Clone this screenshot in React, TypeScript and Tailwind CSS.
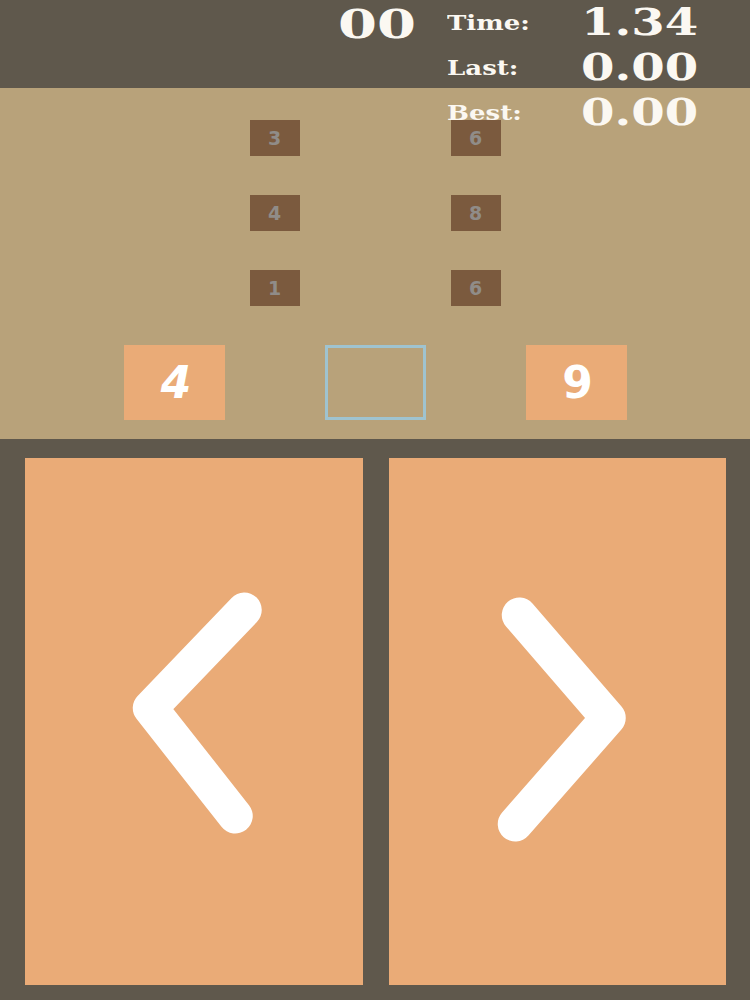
import React from 'react';

const slab = { fontFamily: '"DejaVu Serif", "Liberation Serif", serif' };
const round = { fontFamily: '"DejaVu Sans", "Noto Sans", sans-serif' };

const clues = ['3', '6', '4', '8', '1', '6'];

function Chevron({ points }: { points: string }) {
  return (
    <svg viewBox="0 0 337 527" className="h-full w-full">
      <polyline
        points={points}
        fill="none"
        stroke="#ffffff"
        strokeWidth={35}
        strokeLinecap="round"
        strokeLinejoin="round"
      />
    </svg>
  );
}

export default function App() {
  return (
    <div className="relative w-[750px] h-[1000px] overflow-hidden bg-[#5f584c] select-none">
      {/* score bar */}
      <header className="h-[88px] bg-[#5f584c] pl-[338px] pt-[1px]">
        <span
          className="inline-block origin-left scale-x-[1.4] text-[40px] font-bold leading-[46px] text-[#fbf8f2]"
          style={slab}
        >
          00
        </span>
      </header>

      {/* timers, spilling over the board */}
      <div className="absolute left-[447px] top-0 w-[251px] grid grid-cols-[auto_1fr] text-[#fbf8f2]" style={slab}>
        {[
          ['Time:', '1.34'],
          ['Last:', '0.00'],
          ['Best:', '0.00'],
        ].map(([label, value]) => (
          <React.Fragment key={label}>
            <div className="h-[45px] flex items-center">
              <span className="inline-block origin-left scale-x-[1.3] text-[20px] font-bold">{label}</span>
            </div>
            <div className="h-[45px] flex items-center justify-end">
              <span className="inline-block origin-right scale-x-[1.3] text-[37px] font-bold">{value}</span>
            </div>
          </React.Fragment>
        ))}
      </div>

      {/* board */}
      <section className="h-[351px] bg-[#b8a27a] flex flex-col items-center pt-[32px]">
        <div className="grid grid-cols-2 gap-x-[151px] gap-y-[39px]">
          {clues.map((n, i) => (
            <div
              key={i}
              className="w-[50px] h-[36px] bg-[#7b5a3e] flex items-center justify-center text-[19px] font-bold text-[#908c88]"
              style={round}
            >
              {n}
            </div>
          ))}
        </div>
        <div className="mt-[39px] flex gap-[100px]">
          <div
            className="w-[101px] h-[75px] bg-[#eaab77] flex items-center justify-center pl-[4px] text-[44px] font-bold italic text-white"
            style={round}
          >
            4
          </div>
          <div className="w-[101px] h-[75px] border-[3px] border-[#9fc3cf]" />
          <div
            className="w-[101px] h-[75px] bg-[#eaab77] flex items-center justify-center pl-[3px] text-[44px] font-bold text-white"
            style={round}
          >
            9
          </div>
        </div>
      </section>

      {/* controls */}
      <section className="flex gap-[26px] pl-[25px] pr-[24px] pt-[19px] pb-[15px]">
        <button className="w-[337.5px] h-[527px] bg-[#eaab77]">
          <Chevron points="219,152 125,250 210,358" />
        </button>
        <button className="w-[337.5px] h-[527px] bg-[#eaab77]">
          <Chevron points="130,157 219,260 126,366" />
        </button>
      </section>
    </div>
  );
}
